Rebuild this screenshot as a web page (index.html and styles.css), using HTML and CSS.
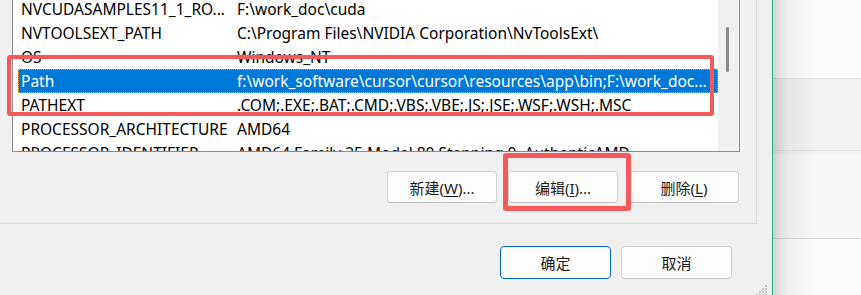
FILE: index.html
```html
<!DOCTYPE html>
<html lang="zh-CN">
<head>
  <meta charset="UTF-8">
  <title>编辑环境变量</title>
  <link rel="stylesheet" href="styles.css">
</head>
<body>
  <div class="dialog">
    <section class="frame">
      <div class="listbox">
        <div class="rows">
          <div class="row"><span>NVCUDASAMPLES11_1_RO...</span><span>F:\work_doc\cuda</span></div>
          <div class="row"><span>NVTOOLSEXT_PATH</span><span>C:\Program Files\NVIDIA Corporation\NvToolsExt\</span></div>
          <div class="row"><span>OS</span><span>Windows_NT</span></div>
          <div class="row selected"><span>Path</span><span>f:\work_software\cursor\cursor\resources\app\bin;F:\work_doc...</span></div>
          <div class="row"><span>PATHEXT</span><span>.COM;.EXE;.BAT;.CMD;.VBS;.VBE;.JS;.JSE;.WSF;.WSH;.MSC</span></div>
          <div class="row"><span>PROCESSOR_ARCHITECTURE</span><span>AMD64</span></div>
          <div class="row"><span>PROCESSOR_IDENTIFIER</span><span>AMD64 Family 25 Model 80 Stepping 0, AuthenticAMD</span></div>
        </div>
        <div class="scrollbar"><div class="thumb"></div></div>
      </div>
      <div class="actions">
        <button class="btn">新建(<u>W</u>)...</button>
        <button class="btn">编辑(<u>I</u>)...</button>
        <button class="btn">删除(<u>L</u>)</button>
      </div>
    </section>

    <div class="footer">
      <button class="btn primary">确定</button>
      <button class="btn">取消</button>
    </div>

    <svg class="grip" width="14" height="12" viewBox="0 0 14 12">
      <rect x="9" y="0" width="2" height="2"/>
      <rect x="6" y="3" width="2" height="2"/><rect x="9" y="3" width="2" height="2"/>
      <rect x="3" y="6" width="2" height="2"/><rect x="6" y="6" width="2" height="2"/><rect x="9" y="6" width="2" height="2"/>
      <rect x="0" y="9" width="2" height="2"/><rect x="3" y="9" width="2" height="2"/><rect x="6" y="9" width="2" height="2"/><rect x="9" y="9" width="2" height="2"/>
    </svg>

    <div class="mark mark-rows"></div>
    <div class="mark mark-edit"></div>
  </div>

  <div class="behind">
    <div class="band b1"></div>
    <div class="band b2"></div>
    <div class="band b3"></div>
    <div class="band b4"></div>
  </div>
</body>
</html>
```

FILE: styles.css
```css
:root {
  font-family: "Noto Sans", "Noto Sans CJK SC", sans-serif;
  font-size: 15px;
  color: #000;
}
body {
  margin: 0;
  width: 861px;
  height: 295px;
  overflow: hidden;
  display: flex;
  background: #f0f0f0;
}
.dialog {
  position: relative;
  width: 772px;
  flex: none;
  border-right: 1px solid #19b394;
  display: flex;
  flex-direction: column;
}
.frame {
  width: 757px;
  height: 224px;
  box-sizing: border-box;
  border-right: 1px solid #dadada;
  border-bottom: 1px solid #dadada;
  padding-left: 12px;
  display: flex;
  flex-direction: column;
}
.listbox {
  width: 728px;
  height: 152px;
  box-sizing: border-box;
  border: 1px solid #8b8b8b;
  border-top: none;
  background: #fff;
  display: flex;
  overflow: hidden;
}
.rows {
  flex: 1;
  padding-left: 5px;
}
.row {
  display: grid;
  grid-template-columns: 216px 1fr;
  height: 24px;
  line-height: 24px;
  font-size: 15.5px;
  padding-left: 3px;
  white-space: nowrap;
  overflow: hidden;
}
/* first row is scrolled partly out of view */
.row:first-child {
  height: 21px;
  line-height: 18px;
}
.row.selected {
  background: #0078d7;
  color: #fff;
  outline: 1px dotted #f5a046;
  outline-offset: -1px;
}
.scrollbar {
  width: 21px;
  flex: none;
  background: #f0f0f0;
  position: relative;
}
.thumb {
  position: absolute;
  left: 8px;
  top: 27px;
  width: 3px;
  height: 45px;
  border-radius: 2px;
  background: #8a8a8a;
}
.actions {
  display: flex;
  justify-content: flex-end;
  gap: 11px;
  margin-top: 19px;
  padding-right: 17px;
}
.btn {
  font: inherit;
  font-size: 15px;
  width: 110px;
  height: 32px;
  padding: 0;
  background: #fdfdfd;
  border: 1px solid #d0d0d0;
  border-bottom-color: #c0c0c0;
  border-radius: 4px;
  color: #1a1a1a;
}
.btn u {
  text-underline-offset: 2px;
}
.footer {
  display: flex;
  justify-content: flex-end;
  gap: 10px;
  margin-top: 22px;
  padding-right: 40px;
}
.footer .btn {
  width: 111px;
  height: 33px;
}
.btn.primary {
  border: 1px solid #0067c0;
  box-shadow: inset 0 0 0 1px #fff;
}
.grip {
  position: absolute;
  right: 2px;
  bottom: -2px;
  fill: #c4c4c4;
}
.mark {
  position: absolute;
  border: 4px solid #f45a5a;
  border-radius: 3px;
  box-sizing: border-box;
}
.mark-rows {
  left: 7px;
  top: 55px;
  width: 707px;
  height: 61px;
}
.mark-edit {
  left: 503px;
  top: 153px;
  width: 128px;
  height: 58px;
  border-width: 5px;
}
.behind {
  position: relative;
  flex: 1;
  display: flex;
  flex-direction: column;
}
.behind::before {
  content: "";
  position: absolute;
  inset: 0;
  background: linear-gradient(to right, rgba(0, 0, 0, 0.16), rgba(0, 0, 0, 0.05) 14px, transparent 45px);
}
.band {
  border-bottom: 1px solid #e2e2e2;
}
.b1 { height: 78px; background: #fbfbfb; }
.b2 { height: 71px; background: #f1f1f1; border-bottom-color: #e4e4e4; }
.b3 { height: 84px; background: #f7f7f7; border-top: 3px solid #efefef; border-bottom-color: #dedede; }
.b4 { flex: 1; background: #fbfbfb; border: none; }
```
